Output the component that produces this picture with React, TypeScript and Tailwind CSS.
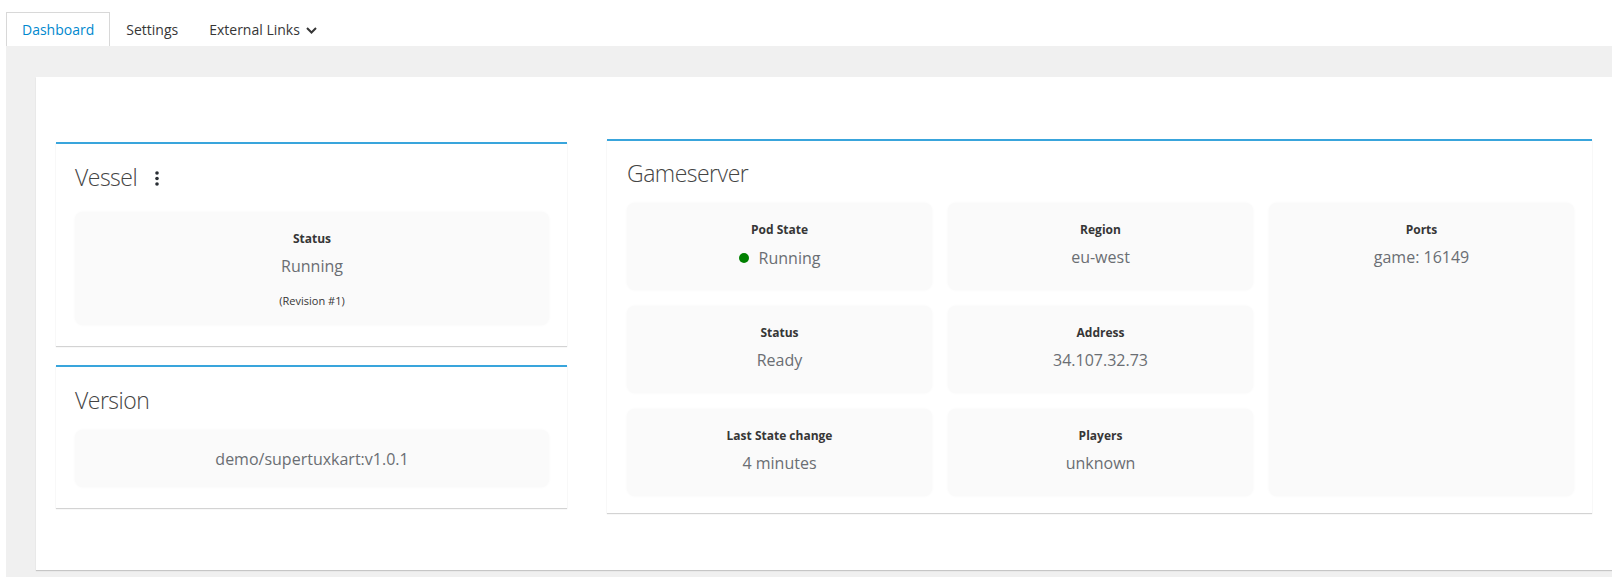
import React from "react";

const font = { fontFamily: '"Open Sans", "Liberation Sans", sans-serif' };

function Stat({
  label,
  children,
  className = "",
}: {
  label: string;
  children: React.ReactNode;
  className?: string;
}) {
  return (
    <div
      className={`rounded-[8px] bg-[#fafafa] shadow-[0_0_3px_rgba(0,0,0,0.04)] pt-[18px] pb-[20px] text-center ${className}`}
    >
      <div className="text-[12px] leading-[18px] font-bold text-[#363636]">{label}</div>
      <div className="mt-[6px] text-[16px] leading-[24px] text-[#6a6e73]">{children}</div>
    </div>
  );
}

function Card({ className = "", children }: { className?: string; children: React.ReactNode }) {
  return (
    <div
      className={`bg-white border-t-2 border-[#39a5dc] shadow-[0_1px_1px_rgba(3,3,3,0.175)] ${className}`}
    >
      {children}
    </div>
  );
}

// Open Sans Light is not installed, so a slightly smaller, tighter regular stands in for it
function Title({ children }: { children: React.ReactNode }) {
  return (
    <div className="flex items-center h-[28px] text-[23px] leading-[28px] tracking-[-0.5px] font-light text-[#444444]">
      {children}
    </div>
  );
}

function Kebab() {
  return (
    <svg width="6" height="16" viewBox="0 0 6 16" className="ml-[17px] mt-[2px]">
      <circle cx="3" cy="3" r="1.8" fill="#292e34" />
      <circle cx="3" cy="8.5" r="1.8" fill="#292e34" />
      <circle cx="3" cy="14" r="1.8" fill="#292e34" />
    </svg>
  );
}

export default function App() {
  return (
    <div className="h-[577px] w-[1612px] overflow-hidden bg-white" style={font}>
      {/* tabs */}
      <div className="flex pl-[6px] pt-[12px] text-[14px]">
        <div className="flex h-[34px] items-center border border-b-0 border-[#d8d8d8] bg-white px-[15px] text-[#0088ce]">
          Dashboard
        </div>
        <div className="flex h-[34px] items-center border border-transparent pl-[15px] pr-[14px] text-[#363636]">
          Settings
        </div>
        <div className="flex h-[34px] items-center border border-transparent px-[15px] text-[#363636]">
          External Links
          <svg width="11" height="7" viewBox="0 0 11 7" className="ml-[6px] mt-[2px]">
            <path d="M1 1 L5.5 5.5 L10 1" fill="none" stroke="#363636" strokeWidth="2" />
          </svg>
        </div>
      </div>

      {/* grey page area */}
      <div className="ml-[6px] bg-[#f0f0f0] pl-[30px] pt-[31px] pb-[7px]">
        <div className="h-[493px] w-[1600px] bg-white shadow-[0_1px_1px_rgba(3,3,3,0.175)] pl-[20px] pt-[62px]">
          <div className="flex items-start gap-[40px]">
            {/* left column */}
            <div className="w-[511px] shrink-0 mt-[3px]">
              <Card className="pl-[19px] pr-[18px] pt-[19px] pb-[21px]">
                <Title>
                  Vessel
                  <Kebab />
                </Title>
                <div className="mt-[21px] rounded-[8px] bg-[#fafafa] shadow-[0_0_3px_rgba(0,0,0,0.04)] pt-[18px] pb-[16px] text-center">
                  <div className="text-[12px] leading-[18px] font-bold text-[#363636]">Status</div>
                  <div className="mt-[6px] text-[16px] leading-[24px] text-[#6a6e73]">Running</div>
                  <div className="mt-[15px] text-[11px] leading-[16px] text-[#363636]">(Revision #1)</div>
                </div>
              </Card>
              <Card className="mt-[19px] pl-[19px] pr-[18px] pt-[19px] pb-[21px]">
                <Title>Version</Title>
                <div className="mt-[16px] rounded-[8px] bg-[#fafafa] shadow-[0_0_3px_rgba(0,0,0,0.04)] pt-[17px] pb-[16px] text-center text-[16px] leading-[24px] text-[#6a6e73]">
                  demo/supertuxkart:v1.0.1
                </div>
              </Card>
            </div>

            {/* right column */}
            <Card className="w-[985px] shrink-0 pl-[20px] pr-[18px] pt-[18px] pb-[17px]">
              <Title>Gameserver</Title>
              <div className="mt-[16px] grid grid-cols-3 grid-rows-3 gap-[16px]">
                <Stat label="Pod State">
                  <span className="inline-flex items-center">
                    <span className="mr-[10px] inline-block h-[10px] w-[10px] rounded-full bg-[#008000]" />
                    Running
                  </span>
                </Stat>
                <Stat label="Region">eu-west</Stat>
                <Stat label="Ports" className="row-span-3">
                  game: 16149
                </Stat>
                <Stat label="Status">Ready</Stat>
                <Stat label="Address">34.107.32.73</Stat>
                <Stat label="Last State change">4 minutes</Stat>
                <Stat label="Players">unknown</Stat>
              </div>
            </Card>
          </div>
        </div>
      </div>
    </div>
  );
}
